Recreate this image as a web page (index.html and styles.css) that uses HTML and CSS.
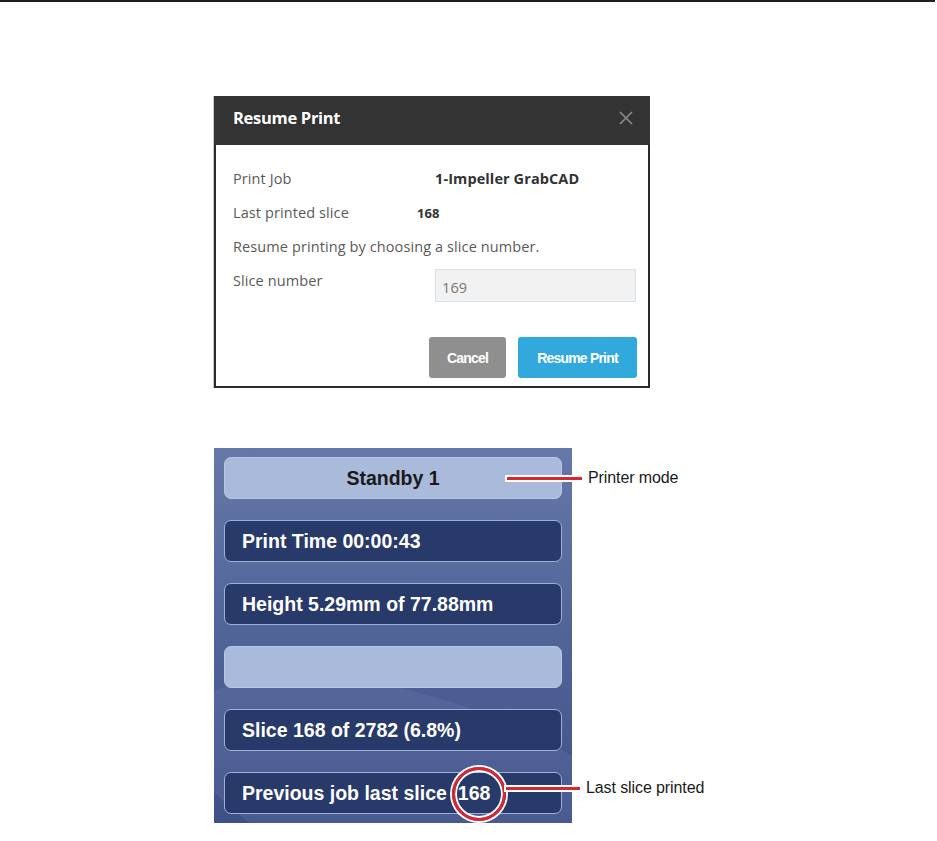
FILE: index.html
```html
<!DOCTYPE html>
<html lang="en">
<head>
    <meta charset="UTF-8">
    <title>Resume Print</title>
    <link rel="stylesheet" href="styles.css">
</head>
<body>
    <div class="top-rule"></div>

    <div class="dialog">
        <div class="dialog-header">
            <span class="dialog-title">Resume Print</span>
            <svg class="dialog-close" width="14" height="14" viewBox="0 0 14 14">
                <path d="M1 1 L13 13 M13 1 L1 13" stroke="#8c8c8c" stroke-width="1.6" fill="none"/>
            </svg>
        </div>
        <div class="dialog-body">
            <div class="row row-job">
                <span class="label">Print Job</span>
                <span class="value">1-Impeller GrabCAD</span>
            </div>
            <div class="row row-last">
                <span class="label">Last printed slice</span>
                <span class="value">168</span>
            </div>
            <div class="row">
                <span class="label">Resume printing by choosing a slice number.</span>
            </div>
            <div class="row row-slice">
                <span class="label">Slice number</span>
                <div class="slice-input">169</div>
            </div>
            <div class="dialog-actions">
                <button class="btn btn-cancel">Cancel</button>
                <button class="btn btn-resume">Resume Print</button>
            </div>
        </div>
    </div>

    <div class="status-wrap">
        <div class="status-panel">
            <div class="status-box light center">Standby 1</div>
            <div class="status-box">Print Time 00:00:43</div>
            <div class="status-box">Height 5.29mm of 77.88mm</div>
            <div class="status-box light"></div>
            <div class="status-box">Slice 168 of 2782 (6.8%)</div>
            <div class="status-box">Previous job last slice <span class="last-num">168</span></div>
            <div class="swoosh"></div>
        </div>

        <!-- callouts -->
        <div class="callout callout-mode">
            <span class="callout-line"></span>
            <span class="callout-text">Printer mode</span>
        </div>
        <div class="ring"></div>
        <div class="callout callout-slice">
            <span class="callout-line"></span>
            <span class="callout-text">Last slice printed</span>
        </div>
    </div>
</body>
</html>
```

FILE: styles.css
```css
body {
    margin: 0;
    background: #ffffff;
    font-family: "Open Sans", "Noto Sans", sans-serif;
}

.top-rule {
    width: 935px;
    height: 2px;
    background: #231f20;
}

/* dialog */
.dialog {
    width: 432px;
    margin: 94px 0 0 214px;
    border: 2px solid #2b2b2b;
    border-top: 0;
    background: #ffffff;
    box-shadow: -1px 0 0 #c8c8c8;
}

.dialog-header {
    height: 49px;
    background: #333333;
    display: flex;
    align-items: center;
    justify-content: space-between;
    padding: 0 17px 0 19px;
    margin: 0 -2px;
}

.dialog-title {
    color: #ffffff;
    font-weight: 700;
    font-size: 16.5px;
    letter-spacing: -0.3px;
    margin-top: -6px;
}

.dialog-close {
    margin-top: -6px;
}

.dialog-body {
    padding: 24px 11px 8px 17px;
    color: #5a5a5a;
    font-size: 14.5px;
    letter-spacing: 0.1px;
}

.row {
    display: flex;
    align-items: flex-start;
    height: 34px;
}

.row-job .label {
    width: 202px;
}

.row-last .label {
    width: 184px;
}

.row-slice .label {
    width: 202px;
}

.value {
    color: #333333;
    font-weight: 700;
}

.row-last .value {
    font-size: 13px;
    margin-top: 1px;
}

.row-slice {
    height: 68px;
}

.slice-input {
    width: 201px;
    height: 33px;
    margin-top: -2px;
    padding: 3px 0 0 6px;
    border: 1px solid #d5e4ec;
    background: #f2f2f2;
    color: #777777;
    font-size: 14.5px;
    display: flex;
    align-items: center;
    box-sizing: border-box;
}

.dialog-actions {
    display: flex;
    justify-content: flex-end;
    gap: 12px;
    margin-top: -2px;
}

.btn {
    height: 41px;
    border: 0;
    border-radius: 3px;
    color: #ffffff;
    font-family: "Liberation Sans", sans-serif;
    font-weight: 700;
    font-size: 14px;
    letter-spacing: -0.8px;
}

.btn-cancel {
    width: 77px;
    background: #8f8f8f;
}

.btn-resume {
    width: 119px;
    background: #32a9dc;
}

/* status panel */
.status-wrap {
    position: relative;
    margin: 60px 0 0 214px;
    width: 520px;
}

.status-panel {
    position: relative;
    overflow: hidden;
    width: 338px;
    padding: 9px 10px;
    display: flex;
    flex-direction: column;
    gap: 21px;
    background: linear-gradient(180deg, #6678a9 0%, #53669a 45%, #3f5087 100%);
}

.swoosh {
    position: absolute;
    left: -40px;
    top: 250px;
    width: 500px;
    height: 200px;
    border-radius: 50%;
    background: rgba(120, 140, 190, 0.18);
    transform: rotate(18deg);
}

.status-box {
    position: relative;
    z-index: 1;
    height: 42px;
    box-sizing: border-box;
    border: 1px solid #9fb1d8;
    border-radius: 7px;
    background: #283a6a;
    color: #ffffff;
    font-family: "Liberation Sans", Arial, sans-serif;
    font-weight: 700;
    font-size: 19.5px;
    display: flex;
    align-items: center;
    padding-left: 17px;
}

.status-box.light {
    background: #a9badb;
    border-color: #b7c6e2;
    color: #1a1a1a;
}

.status-box.center {
    justify-content: center;
    padding-left: 0;
}

.last-num {
    margin-left: 11px;
}

/* callouts */
.ring {
    position: absolute;
    left: 238px;
    top: 319px;
    width: 48px;
    height: 48px;
    border: 3px solid #d7272f;
    border-radius: 50%;
    box-shadow: 0 0 0 2px #ffffff, inset 0 0 0 2px #ffffff;
    z-index: 2;
}

.callout {
    position: absolute;
    display: flex;
    align-items: center;
    z-index: 2;
}

.callout-line {
    display: block;
    height: 3px;
    background: #d7272f;
    box-shadow: 0 0 0 2px #ffffff;
}

.callout-text {
    margin-left: 6px;
    font-family: "Liberation Sans", Arial, sans-serif;
    font-size: 16px;
    color: #1a1a1a;
    letter-spacing: -0.1px;
}

.callout-mode {
    left: 293px;
    top: 21px;
}

.callout-mode .callout-line {
    width: 75px;
}

.callout-slice {
    left: 292px;
    top: 331px;
}

.callout-slice .callout-line {
    width: 74px;
}
```
